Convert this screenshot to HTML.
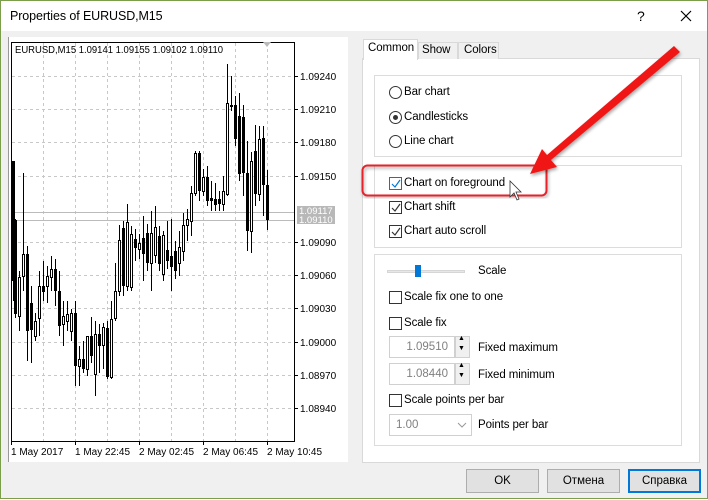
<!DOCTYPE html>
<html><head><meta charset="utf-8"><style>
*{margin:0;padding:0;box-sizing:border-box}
body{width:708px;height:499px;overflow:hidden;font-family:"Liberation Sans",sans-serif;font-size:11.5px;color:#000}
.win{position:absolute;left:0;top:0;width:708px;height:499px;border:1px solid #7a9e4c;background:#f0f0f0}
.title{position:absolute;left:0;top:0;width:706px;height:30px;background:#fff}
.abs{position:absolute}
.grp{position:absolute;border:1px solid #dcdcdc;background:#fff}
.lbl{position:absolute;font-size:11.5px;white-space:nowrap;letter-spacing:-0.1px}
.cb{position:absolute;width:13px;height:13px;border:1px solid #333;background:#fff}
.rb{position:absolute;width:13px;height:13px;border:1px solid #333;border-radius:50%;background:#fff}
.btn{position:absolute;height:24px;border:1px solid #adadad;background:#e1e1e1;text-align:center;line-height:22px}
.inp{position:absolute;height:22px;border:1px solid #d0d0d0;background:#fff;color:#808080;text-align:right;padding-right:6px;line-height:20px}
.spin{position:absolute;width:15px;height:22px;border:1px solid #d0d0d0;background:#f0f0f0}
</style></head><body>
<div class="win">
<div class="title"></div>
<div class="lbl" style="left:9px;top:8px;font-size:12.5px">Properties of EURUSD,M15</div>
<div class="lbl" style="left:636px;top:7px;font-size:14px">?</div>
<svg class="abs" style="left:679px;top:9px" width="12" height="12"><path d="M1 1L11 11M11 1L1 11" stroke="#000" stroke-width="1.2"/></svg>

<div class="abs" style="left:7px;top:36px;width:340px;height:425px;background:#fff;border-left:1px solid #999"></div>
<svg class="abs" style="left:0;top:0" width="360" height="470">
<g stroke="#c8c8c8" stroke-dasharray="3,3" stroke-width="1">
<path d="M42.5 42V440M74.5 42V440M106.5 42V440M138.5 42V440M170.5 42V440M202.5 42V440M234.5 42V440M266.5 42V440"/>
<path d="M11 75.5H293M11 108.5H293M11 141.5H293M11 175.5H293M11 241.5H293M11 274.5H293M11 307.5H293M11 341.5H293M11 374.5H293M11 407.5H293"/>
</g>
<path d="M11 211.5H293M11 219.5H293" stroke="#bbb"/>
<rect x="10.5" y="41.5" width="283" height="399" fill="none" stroke="#000"/>
<path d="M262 41L270 41L266 46Z" fill="#bbb"/>
<g stroke="#000"><path d="M293 75.5h4M293 108.5h4M293 141.5h4M293 175.5h4M293 241.5h4M293 274.5h4M293 307.5h4M293 341.5h4M293 374.5h4M293 407.5h4M10.5 440v4M74.5 440v4M138.5 440v4M202.5 440v4M266.5 440v4"/></g>
<g font-family="Liberation Sans" font-size="10" fill="#000">
<text x="14" y="52" textLength="208" lengthAdjust="spacingAndGlyphs">EURUSD,M15  1.09141 1.09155 1.09102 1.09110</text>
<text x="299" y="79">1.09240</text><text x="299" y="112">1.09210</text><text x="299" y="145">1.09180</text><text x="299" y="179">1.09150</text><text x="299" y="245">1.09090</text><text x="299" y="278">1.09060</text><text x="299" y="311">1.09030</text><text x="299" y="345">1.09000</text><text x="299" y="378">1.08970</text><text x="299" y="411">1.08940</text>
<text x="10" y="454">1 May 2017</text><text x="74" y="454">1 May 22:45</text><text x="138" y="454">2 May 02:45</text><text x="202" y="454">2 May 06:45</text><text x="266" y="454">2 May 10:45</text>
</g>
<rect x="296" y="205" width="38" height="18" fill="#b8b8b8"/>
<g font-family="Liberation Sans" font-size="9.5" fill="#fff"><text x="298" y="213">1.09117</text><text x="298" y="222">1.09110</text></g>
<g stroke="#000" stroke-width="1">
<path d="M12.5 160V300M14.5 218V317M18.5 270V330M22.5 172V290M26.5 245V360M30.5 285V362M34.5 312V340M38.5 270V335M42.5 260V300M46.5 265V302M50.5 255V290M54.5 258V305M58.5 270V335M62.5 300V345M66.5 300V330M70.5 308V340M74.5 300V385M78.5 345V385M82.5 340V372M86.5 335V375M90.5 316V362M94.5 320V395M98.5 323V372M102.5 322V368M106.5 320V378M110.5 300V378M114.5 262V320M118.5 224V295M122.5 220V295M126.5 203V290M130.5 225V290M134.5 228V260M138.5 233V258M142.5 215V280M146.5 223V270M150.5 210V290M154.5 205V262M158.5 225V270M162.5 230V280M166.5 220V268M170.5 218V290M174.5 240V278M178.5 230V275M182.5 212V260M186.5 208V240M190.5 185V235M194.5 150V195M198.5 150V200M202.5 168V195M206.5 165V205M210.5 180V210M214.5 182V210M218.5 190V210M222.5 175V210M226.5 63V195M230.5 75V110M234.5 95V145M238.5 92V180M242.5 104V195M246.5 140V250M250.5 151V252M254.5 124V205M258.5 125V200M262.5 125V215M266.5 169V229"/>
</g>
<g fill="#000">
<rect x="11" y="160" width="3" height="120"/><rect x="13" y="219" width="3" height="94"/><rect x="25" y="253" width="3" height="77"/><rect x="29" y="302" width="3" height="27"/><rect x="41" y="285" width="3" height="6"/><rect x="53" y="268" width="3" height="22"/><rect x="57" y="290" width="3" height="35"/><rect x="73" y="312" width="3" height="53"/><rect x="81" y="358" width="3" height="10"/><rect x="89" y="335" width="3" height="20"/><rect x="97" y="333" width="3" height="12"/><rect x="105" y="327" width="3" height="49"/><rect x="121" y="227" width="3" height="58"/><rect x="133" y="238" width="3" height="9"/><rect x="141" y="237" width="3" height="16"/><rect x="145" y="232" width="3" height="30"/><rect x="157" y="235" width="3" height="28"/><rect x="165" y="249" width="3" height="11"/><rect x="169" y="255" width="3" height="11"/><rect x="173" y="250" width="3" height="20"/><rect x="197" y="152" width="3" height="38"/><rect x="205" y="176" width="3" height="24"/><rect x="209" y="197" width="3" height="3"/><rect x="213" y="198" width="3" height="6"/><rect x="217" y="198" width="3" height="5"/><rect x="229" y="104" width="3" height="2"/><rect x="233" y="104" width="3" height="34"/><rect x="237" y="115" width="3" height="58"/><rect x="241" y="116" width="3" height="56"/><rect x="245" y="172" width="3" height="58"/><rect x="253" y="150" width="3" height="43"/><rect x="261" y="137" width="3" height="47"/><rect x="265" y="184" width="3" height="35"/>
</g>
<g fill="#fff" stroke="#000">
<rect x="17.5" y="276.5" width="2" height="39"/><rect x="21.5" y="253.5" width="2" height="22"/><rect x="33.5" y="320.5" width="2" height="15"/><rect x="37.5" y="285.5" width="2" height="32"/><rect x="45.5" y="275.5" width="2" height="10"/><rect x="49.5" y="268.5" width="2" height="8"/><rect x="61.5" y="315.5" width="2" height="8"/><rect x="65.5" y="313.5" width="2" height="7"/><rect x="69.5" y="312.5" width="2" height="18"/><rect x="77.5" y="358.5" width="2" height="7"/><rect x="85.5" y="335.5" width="2" height="33"/><rect x="93.5" y="333.5" width="2" height="40"/><rect x="101.5" y="326.5" width="2" height="18"/><rect x="109.5" y="318.5" width="2" height="58"/><rect x="113.5" y="290.5" width="2" height="27"/><rect x="117.5" y="239.5" width="2" height="51"/><rect x="125.5" y="221.5" width="2" height="64"/><rect x="129.5" y="233.5" width="2" height="53"/><rect x="137.5" y="242.5" width="2" height="6"/><rect x="149.5" y="232.5" width="2" height="30"/><rect x="153.5" y="226.5" width="2" height="28"/><rect x="161.5" y="234.5" width="2" height="39"/><rect x="177.5" y="246.5" width="2" height="16"/><rect x="181.5" y="224.5" width="2" height="26"/><rect x="185.5" y="218.5" width="2" height="6"/><rect x="189.5" y="192.5" width="2" height="28"/><rect x="193.5" y="152.5" width="2" height="40"/><rect x="201.5" y="176.5" width="2" height="14"/><rect x="221.5" y="190.5" width="2" height="13"/><rect x="225.5" y="102.5" width="2" height="91"/><rect x="249.5" y="160.5" width="2" height="70"/><rect x="257.5" y="138.5" width="2" height="55"/>
</g>
</svg>

<div class="abs" style="left:361px;top:57px;width:338px;height:405px;background:#fff;border:1px solid #d9d9d9"></div>
<div class="abs" style="left:417px;top:41px;width:40px;height:17px;background:#f0f0f0;border:1px solid #d9d9d9;border-bottom:none"></div>
<div class="lbl" style="left:421px;top:43px">Show</div>
<div class="abs" style="left:457px;top:41px;width:41px;height:17px;background:#f0f0f0;border:1px solid #d9d9d9;border-bottom:none"></div>
<div class="lbl" style="left:463px;top:43px">Colors</div>
<div class="abs" style="left:362px;top:38px;width:55px;height:21px;background:#fff;border:1px solid #d9d9d9;border-bottom:none"></div>
<div class="lbl" style="left:367px;top:41px">Common</div>

<div class="grp" style="left:373px;top:74px;width:308px;height:82px"></div>
<div class="grp" style="left:373px;top:164px;width:308px;height:83px"></div>
<div class="grp" style="left:373px;top:253px;width:308px;height:192px"></div>

<div class="rb" style="left:388px;top:85px"></div><div class="lbl" style="left:403px;top:85px">Bar chart</div>
<div class="rb" style="left:388px;top:110px"></div><div class="abs" style="left:392px;top:114px;width:5px;height:5px;border-radius:50%;background:#333"></div><div class="lbl" style="left:403px;top:110px">Candlesticks</div>
<div class="rb" style="left:388px;top:134px"></div><div class="lbl" style="left:403px;top:134px">Line chart</div>

<div class="cb" style="left:388px;top:176px;border-color:#0078d7"></div><svg class="abs" style="left:389px;top:177px" width="12" height="12"><path d="M2 6L5 9L10 2" stroke="#0078d7" fill="none" stroke-width="1.2"/></svg><div class="lbl" style="left:403px;top:176px">Chart on foreground</div>
<div class="cb" style="left:388px;top:200px"></div><svg class="abs" style="left:389px;top:201px" width="12" height="12"><path d="M2 6L5 9L10 2" stroke="#333" fill="none" stroke-width="1.2"/></svg><div class="lbl" style="left:403px;top:200px">Chart shift</div>
<div class="cb" style="left:388px;top:224px"></div><svg class="abs" style="left:389px;top:225px" width="12" height="12"><path d="M2 6L5 9L10 2" stroke="#333" fill="none" stroke-width="1.2"/></svg><div class="lbl" style="left:403px;top:224px">Chart auto scroll</div>

<div class="abs" style="left:386px;top:269px;width:78px;height:3px;background:#e7e7e7;border:1px solid #d6d6d6"></div>
<div class="abs" style="left:414px;top:264px;width:6px;height:12px;background:#0078d7"></div>
<div class="lbl" style="left:477px;top:264px">Scale</div>
<div class="cb" style="left:388px;top:290px"></div><div class="lbl" style="left:403px;top:290px">Scale fix one to one</div>
<div class="cb" style="left:388px;top:316px"></div><div class="lbl" style="left:403px;top:316px">Scale fix</div>
<div class="inp" style="left:388px;top:335px;width:66px">1.09510</div>
<div class="spin" style="left:454px;top:335px"></div><div class="lbl" style="left:457px;top:334px;font-size:7px">▲</div><div class="lbl" style="left:457px;top:344px;font-size:7px">▼</div>
<div class="lbl" style="left:477px;top:341px">Fixed maximum</div>
<div class="inp" style="left:388px;top:362px;width:66px">1.08440</div>
<div class="spin" style="left:454px;top:362px"></div><div class="lbl" style="left:457px;top:361px;font-size:7px">▲</div><div class="lbl" style="left:457px;top:371px;font-size:7px">▼</div>
<div class="lbl" style="left:477px;top:368px">Fixed minimum</div>
<div class="cb" style="left:388px;top:393px"></div><div class="lbl" style="left:403px;top:393px">Scale points per bar</div>
<div class="inp" style="left:388px;top:413px;width:83px;text-align:left;padding-left:6px">1.00</div>
<svg class="abs" style="left:456px;top:420px" width="10" height="8"><path d="M1 2L5 6L9 2" stroke="#999" fill="none"/></svg>
<div class="lbl" style="left:477px;top:418px">Points per bar</div>

<div class="btn" style="left:465px;top:468px;width:73px">OK</div>
<div class="btn" style="left:546px;top:468px;width:73px">Отмена</div>
<div class="btn" style="left:627px;top:468px;width:73px;border:2px solid #0078d7;line-height:20px">Справка</div>

<svg class="abs" style="left:0;top:0" width="708" height="499">
<defs><filter id="sh"><feDropShadow dx="1" dy="2" stdDeviation="1.5" flood-opacity="0.35"/></filter></defs>
<rect x="361.5" y="164.5" width="184" height="30" rx="5" fill="none" stroke="#e8202a" stroke-width="2" filter="url(#sh)"/>
<path d="M673 45L679 51L550 159L556 166L529 173L541 148L546 154Z" fill="#f01818" filter="url(#sh)"/>
<path d="M509 180V196L513 192L516 199L518 198L515 191L520 191Z" fill="#fff" stroke="#333" stroke-width="0.8"/>
</svg>
</div>
</body></html>
